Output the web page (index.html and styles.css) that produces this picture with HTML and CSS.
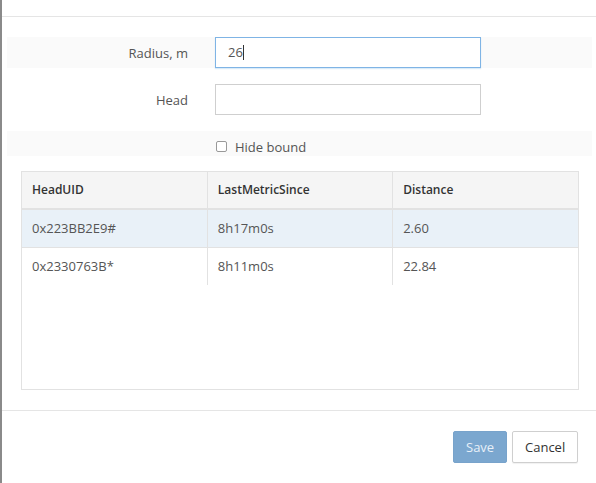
FILE: index.html
```html
<!DOCTYPE html>
<html>
<head>
<meta charset="utf-8">
<link rel="stylesheet" href="styles.css">
</head>
<body>
<div class="modal">
  <div class="modal-header"></div>
  <div class="modal-body">
    <div class="form-row striped">
      <label class="form-label">Radius, m</label>
      <div class="field focused">26<span class="caret"></span></div>
    </div>
    <div class="form-row">
      <label class="form-label">Head</label>
      <div class="field"></div>
    </div>
    <div class="form-row striped check-row">
      <div class="form-label"></div>
      <label class="check"><span class="box"></span>Hide bound</label>
    </div>
    <div class="table-wrap">
      <table class="grid">
        <thead>
          <tr><th>HeadUID</th><th>LastMetricSince</th><th>Distance</th></tr>
        </thead>
        <tbody>
          <tr class="selected"><td>0x223BB2E9#</td><td>8h17m0s</td><td>2.60</td></tr>
          <tr><td>0x2330763B*</td><td>8h11m0s</td><td>22.84</td></tr>
        </tbody>
      </table>
    </div>
  </div>
  <div class="modal-footer">
    <button class="btn btn-primary">Save</button>
    <button class="btn btn-default">Cancel</button>
  </div>
</div>
</body>
</html>
```
FILE: styles.css
```css
html, body {
  margin: 0;
  padding: 0;
  background: #fff;
}
body {
  font-family: "Open Sans", "DejaVu Sans", sans-serif;
  font-size: 13px;
  color: #555;
}
.modal {
  height: 483px;
  border-left: 2px solid #8a8a8a;
  box-sizing: border-box;
  display: flex;
  flex-direction: column;
}
.modal-header {
  height: 16px;
  border-bottom: 1px solid #e5e5e5;
  flex: none;
}
.modal-body {
  padding: 20px 4px 0 5px;
  flex: none;
}
.form-row {
  display: flex;
  align-items: center;
  height: 31px;
  margin-bottom: 16px;
}
.striped {
  background: #fafafa;
}
.form-label {
  width: 181px;
  text-align: right;
  padding-right: 27px;
  flex: none;
  color: #555;
}
.field {
  width: 266px;
  height: 31px;
  box-sizing: border-box;
  border: 1px solid #cfcfcf;
  background: #fff;
  padding: 0 12px;
  line-height: 29px;
  color: #555;
}
.field.focused {
  border-color: #7fb4e5;
  box-shadow: 0 1px 1px rgba(102, 175, 233, 0.25);
}
.caret {
  display: inline-block;
  width: 1px;
  height: 15px;
  background: #333;
  vertical-align: -3px;
}
.check-row {
  height: 25px;
  box-sizing: border-box;
  padding-top: 6px;
  margin-bottom: 15px;
}
.check {
  display: flex;
  align-items: center;
  color: #555;
}
.box {
  width: 9px;
  height: 9px;
  border: 1px solid #999;
  border-radius: 2px;
  background: #fff;
  margin-left: 1px;
  margin-right: 8px;
}
.table-wrap {
  margin: 0 13px 0 14px;
  height: 219px;
  box-sizing: border-box;
  border: 1px solid #e2e2e2;
}
.grid {
  width: 100%;
  border-collapse: collapse;
  table-layout: fixed;
}
.grid th {
  background: #f5f5f5;
  font-weight: 600;
  font-size: 12px;
  color: #333;
  text-align: left;
  height: 35px;
  padding: 0 10px 1px;
  border-bottom: 2px solid #e2e2e2;
  border-left: 1px solid #e2e2e2;
}
.grid td {
  height: 36px;
  padding: 0 10px 1px;
  border-left: 1px solid #e2e2e2;
  color: #555;
}
.grid th:first-child, .grid td:first-child {
  border-left: none;
}
.grid tr.selected td {
  background: #e9f1f8;
  border-bottom: 1px solid #e2e2e2;
}
.modal-footer {
  margin-top: 20px;
  border-top: 1px solid #e5e5e5;
  display: flex;
  justify-content: flex-end;
  gap: 5px;
  padding: 20px 18px 0 0;
}
.btn {
  font-family: "Open Sans", "DejaVu Sans", sans-serif;
  font-size: 13px;
  height: 32px;
  border-radius: 2px;
  padding: 0 12px;
  box-sizing: border-box;
  cursor: pointer;
}
.btn-primary {
  width: 54px;
  background: #7ba7cf;
  border: 1px solid #78a3cb;
  color: #e8f0f8;
}
.btn-default {
  width: 66px;
  background: #fff;
  border: 1px solid #cfcfcf;
  color: #333;
  box-shadow: 0 1px 1px rgba(0,0,0,0.06);
}
```
